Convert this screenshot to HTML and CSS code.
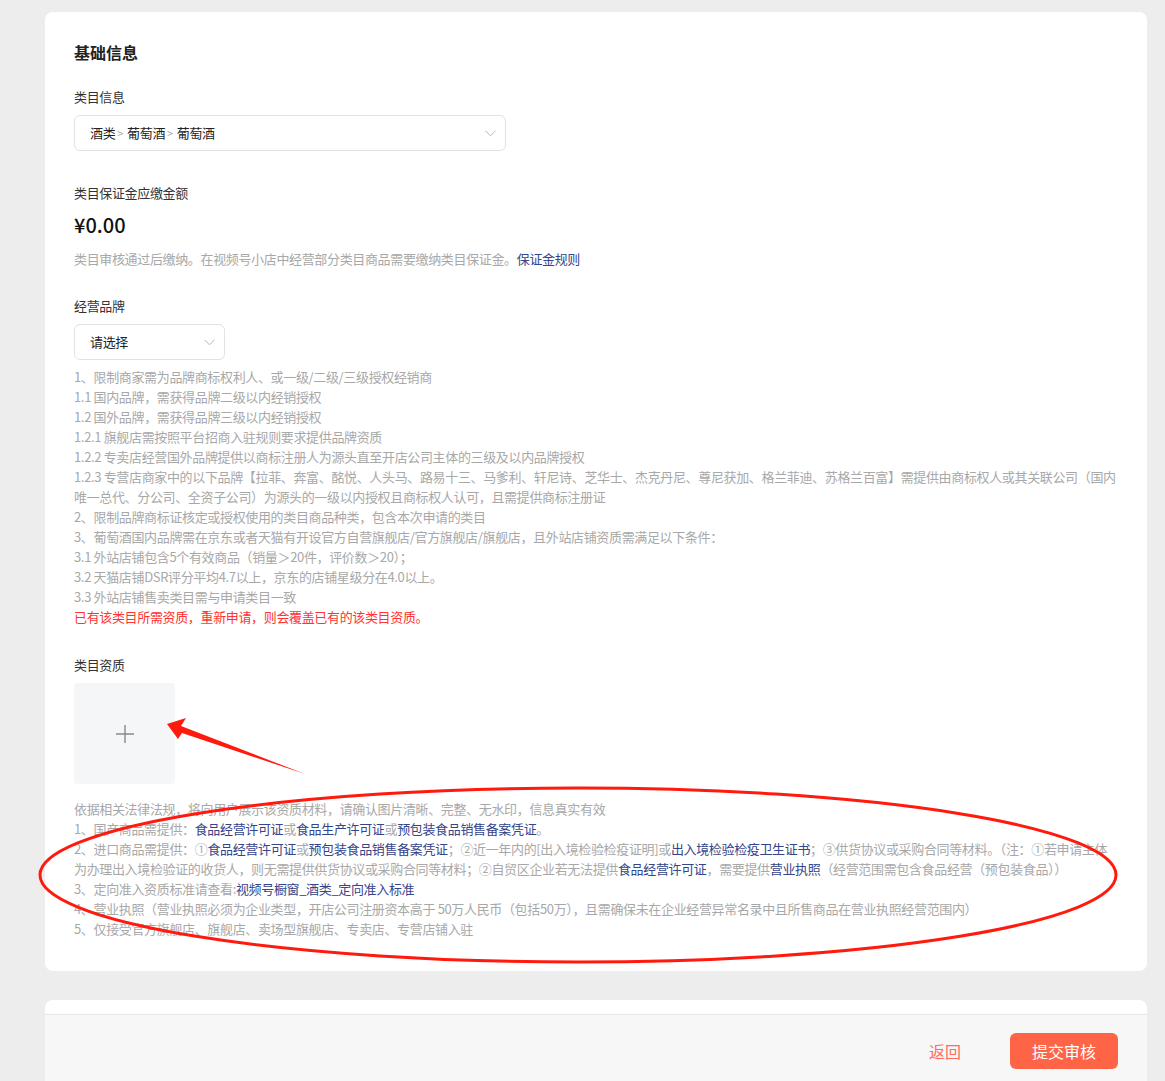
FILE: index.html
```html
<!DOCTYPE html>
<html lang="zh-CN">
<head>
    <meta charset="UTF-8">
    <meta name="viewport" content="width=device-width, initial-scale=1.0">
    <title>类目资质申请</title>
    <link rel="stylesheet" href="styles.css">
</head>
<body>
    <div class="page">
        <div class="card">
            <h2 class="card-title">基础信息</h2>

            <div class="form-item">
                <div class="label">类目信息</div>
                <div class="select select-wide">
                    <span class="select-value">酒类<span class="sep">&gt;</span>葡萄酒<span class="sep">&gt;</span>葡萄酒</span>
                    <svg class="arrow-down" width="11" height="7" viewBox="0 0 11 7"><path d="M0.5 0.8 L5.5 5.8 L10.5 0.8" fill="none" stroke="#b5b5b5" stroke-width="1"/></svg>
                </div>
            </div>

            <div class="form-item tight">
                <div class="label">类目保证金应缴金额</div>
                <div class="amount">¥0.00</div>
                <div class="tip">类目审核通过后缴纳。在视频号小店中经营部分类目商品需要缴纳类目保证金。<a class="link" href="#">保证金规则</a></div>
            </div>

            <div class="form-item">
                <div class="label">经营品牌</div>
                <div class="select select-narrow">
                    <span class="select-value">请选择</span>
                    <svg class="arrow-down" width="11" height="7" viewBox="0 0 11 7"><path d="M0.5 0.8 L5.5 5.8 L10.5 0.8" fill="none" stroke="#b5b5b5" stroke-width="1"/></svg>
                </div>
                <div class="rules">
                    <p>1、限制商家需为品牌商标权利人、或一级/二级/三级授权经销商</p>
                    <p>1.1 国内品牌，需获得品牌二级以内经销授权</p>
                    <p>1.2 国外品牌，需获得品牌三级以内经销授权</p>
                    <p>1.2.1 旗舰店需按照平台招商入驻规则要求提供品牌资质</p>
                    <p>1.2.2 专卖店经营国外品牌提供以商标注册人为源头直至开店公司主体的三级及以内品牌授权</p>
                    <p>1.2.3 专营店商家中的以下品牌【拉菲、奔富、酩悦、人头马、路易十三、马爹利、轩尼诗、芝华士、杰克丹尼、尊尼获加、格兰菲迪、苏格兰百富】需提供由商标权人或其关联公司（国内唯一总代、分公司、全资子公司）为源头的一级以内授权且商标权人认可，且需提供商标注册证</p>
                    <p>2、限制品牌商标证核定或授权使用的类目商品种类，包含本次申请的类目</p>
                    <p>3、葡萄酒国内品牌需在京东或者天猫有开设官方自营旗舰店/官方旗舰店/旗舰店，且外站店铺资质需满足以下条件：</p>
                    <p>3.1 外站店铺包含5个有效商品（销量＞20件，评价数＞20）；</p>
                    <p>3.2 天猫店铺DSR评分平均4.7以上，京东的店铺星级分在4.0以上。</p>
                    <p>3.3 外站店铺售卖类目需与申请类目一致</p>
                    <p class="warn">已有该类目所需资质，重新申请，则会覆盖已有的该类目资质。</p>
                </div>
            </div>

            <div class="form-item last">
                <div class="label">类目资质</div>
                <div class="upload">
                    <svg width="20" height="20" viewBox="0 0 20 20"><path d="M10 1 V19 M1 10 H19" stroke="#8a8a8a" stroke-width="1.4"/></svg>
                </div>
                <div class="rules notes">
                    <p>依据相关法律法规，将向用户展示该资质材料，请确认图片清晰、完整、无水印，信息真实有效</p>
                    <p>1、国产商品需提供：<a class="link" href="#">食品经营许可证</a>或<a class="link" href="#">食品生产许可证</a>或<a class="link" href="#">预包装食品销售备案凭证</a>。</p>
                    <p>2、进口商品需提供：①<a class="link" href="#">食品经营许可证</a>或<a class="link" href="#">预包装食品销售备案凭证</a>；②近一年内的[出入境检验检疫证明]或<a class="link" href="#">出入境检验检疫卫生证书</a>；③供货协议或采购合同等材料。（注：①若申请主体为办理出入境检验证的收货人，则无需提供供货协议或采购合同等材料；②自贸区企业若无法提供<a class="link" href="#">食品经营许可证</a>，需要提供<a class="link" href="#">营业执照</a>（经营范围需包含食品经营（预包装食品））</p>
                    <p>3、定向准入资质标准请查看:<a class="link" href="#">视频号橱窗_酒类_定向准入标准</a></p>
                    <p>4、营业执照（营业执照必须为企业类型，开店公司注册资本高于 50万人民币（包括50万），且需确保未在企业经营异常名录中且所售商品在营业执照经营范围内）</p>
                    <p>5、仅接受官方旗舰店、旗舰店、卖场型旗舰店、专卖店、专营店铺入驻</p>
                </div>
            </div>
        </div>

        <div class="card footer-card">
            <div class="footer-bar">
                <button class="btn-back">返回</button>
                <button class="btn-submit">提交审核</button>
            </div>
        </div>
    </div>

    <!-- 标注：箭头和圈 -->
    <svg class="marks" width="1165" height="1081" viewBox="0 0 1165 1081">
        <ellipse cx="578" cy="875" rx="538" ry="87" fill="none" stroke="#ff1a0d" stroke-width="3"/>
        <polygon points="167,724 186,718 181,726 305,774 182,733 178,739" fill="#ff1a0d"/>
    </svg>
</body>
</html>
```

FILE: styles.css
```css
body {
    margin: 0;
    background-color: #ededed;
    font-family: "Noto Sans CJK SC", "Noto Sans", sans-serif;
    color: #333;
    font-size: 13px;
    letter-spacing: -0.35px;
}

.page {
    width: 1102px;
    padding: 12px 0 0 45px;
}

.card {
    background-color: #fff;
    border-radius: 8px;
    padding: 28px 29px 32px;
}

.card-title {
    margin: 0 0 23px;
    font-size: 16px;
    line-height: 24px;
    font-weight: 700;
    color: #222;
    letter-spacing: 0;
}

.form-item {
    margin-bottom: 28px;
}

.form-item:first-of-type {
    margin-bottom: 32px;
}

.form-item.tight {
    margin-bottom: 27px;
}

.form-item.last {
    margin-bottom: 0;
}

.label {
    line-height: 20px;
    margin-bottom: 8px;
    color: #333;
}

.select {
    display: flex;
    align-items: center;
    justify-content: space-between;
    height: 36px;
    box-sizing: border-box;
    padding: 0 9px 2px 15px;
    border: 1px solid #e2e2e2;
    border-radius: 6px;
    color: #222;
}

.select .arrow-down {
    margin-top: 2px;
}

.select-wide {
    width: 432px;
}

.select-narrow {
    width: 151px;
}

.sep {
    color: #aaa;
    font-size: 11px;
    margin: 0 4px 0 2px;
}

.amount {
    font-size: 20px;
    line-height: 28px;
    font-weight: 500;
    color: #111;
    margin-bottom: 10px;
    letter-spacing: 0;
}

.tip {
    line-height: 20px;
    color: #a8a8a8;
}

.link {
    color: #35458a;
    text-decoration: none;
}

.rules {
    margin-top: 7px;
    color: #a8a8a8;
    line-height: 20px;
}

.rules p {
    margin: 0;
}

.rules .warn {
    color: #ff3333;
}

.notes {
    margin-top: 15px;
}

.upload {
    display: flex;
    align-items: center;
    justify-content: center;
    width: 101px;
    height: 101px;
    background-color: #f5f6f8;
    border-radius: 4px;
}

.footer-card {
    margin-top: 29px;
    padding: 14px 0 0;
    border-radius: 8px 8px 0 0;
}

.footer-bar {
    display: flex;
    justify-content: flex-end;
    align-items: center;
    height: 72px;
    padding: 0 29px;
    background-color: #f7f7f8;
    border-top: 1px solid #e6e6e6;
}

button {
    font-family: inherit;
    font-size: 16px;
    border: none;
    cursor: pointer;
}

.btn-back {
    background: none;
    color: #ff6b5c;
    padding: 0;
    margin-right: 49px;
}

.btn-submit {
    width: 108px;
    height: 36px;
    border-radius: 6px;
    background-color: #ff6446;
    color: #fff;
}

.marks {
    position: absolute;
    top: 0;
    left: 0;
    pointer-events: none;
}
```
